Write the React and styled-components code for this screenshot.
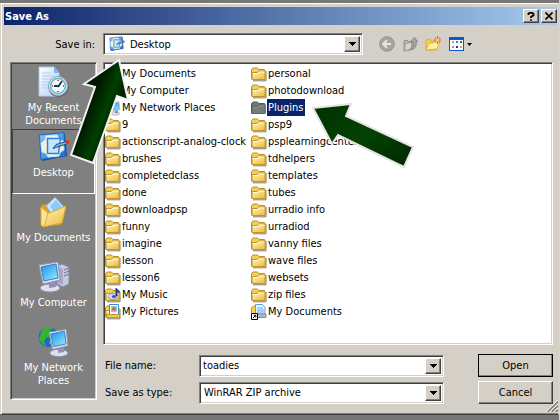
import React, { useState } from 'react'
import styled, { createGlobalStyle } from 'styled-components'

const GlobalStyle = createGlobalStyle`
*{
  box-sizing: border-box;
}
body{
  margin: 0;
  background: #777777;
}
body, button, input, select{
  font-family: "DejaVu Sans Condensed", "Liberation Sans", sans-serif;
  font-size: 11px;
  line-height: 13px;
  color: #000;
}
button, input, select{
  border: none;
  border-radius: 0;
  padding: 0;
  margin: 0;
}
`

const sunken = `
border: 1px solid;
border-color: #808080 #fff #fff #808080;
box-shadow: inset 1px 1px 0 #404040, inset -1px -1px 0 #d4d0c8;
`

const raised = `
background: #d4d0c8;
border: 1px solid;
border-color: #fff #404040 #404040 #fff;
box-shadow: inset -1px -1px 0 #808080;
`

const Dialog = styled.main`
position: relative;
margin-top: 3px;
padding: 3px 1px 10px 3px;
background: #d4d0c8;
border: 1px solid;
border-color: #fff #d4d0c8 #404040 #d4d0c8;
box-shadow: inset 1px 0 0 #fff, inset 0 -1px 0 #808080;
`

const TitleBar = styled.header`
display: flex;
align-items: center;
gap: 2px;
height: 18px;
padding-left: 1px;
background: linear-gradient(90deg, #0a246a, #a6caf0);
`

const Title = styled.h1`
flex: 1;
margin: 0;
font-size: 11px;
font-weight: bold;
color: #fff;
`

const CaptionButton = styled.button`
${raised}
display: grid;
place-items: center;
width: 16px;
height: 14px;
`

const Toolbar = styled.div`
display: flex;
align-items: center;
padding: 8px 0 7px;
`

const SaveInLabel = styled.label`
width: 99px;
padding-right: 8px;
text-align: right;
`

const Combo = styled.div`
${sunken}
position: relative;
display: flex;
flex: ${props => props.$grow ? '1' : '0 1 260px'};
height: 22px;
padding: 2px;
background: #fff;
`

const ComboIcon = styled.span`
position: absolute;
left: 5px;
top: 2px;
pointer-events: none;
`

const comboText = `
flex: 1;
min-width: 0;
background: transparent;
appearance: none;
outline: none;
`

const ComboSelect = styled.select`
${comboText}
padding-left: ${props => props.$icon ? '24px' : '2px'};
`

const ComboInput = styled.input`
${comboText}
padding-left: 1px;
`

const DropButton = styled.button`
${raised}
display: grid;
place-items: center;
width: 16px;
`

const Tools = styled.div`
display: flex;
gap: 7px;
margin-left: 16px;
`

const Tool = styled.button`
display: flex;
align-items: center;
gap: 3px;
background: transparent;
`

const Body = styled.div`
display: grid;
grid-template-columns: 87px 1fr;
column-gap: 6px;
padding: 0 4px 0 6px;
`

const Places = styled.nav`
${sunken}
grid-row: 1 / 3;
margin-bottom: 4px;
padding: 1px;
background: #808080;
`

const Place = styled.button`
display: flex;
flex-direction: column;
align-items: center;
gap: 3px;
width: 100%;
height: 65px;
padding-top: 1px;
color: #fff;
background: transparent;
border: 1px solid;
border-color: ${props => props.$active ? '#404040 #fff #fff #404040' : 'transparent'};
`

const FileList = styled.ul`
${sunken}
display: grid;
grid-template-rows: repeat(15, 17px);
grid-auto-flow: column;
grid-auto-columns: 146px;
align-content: start;
height: 283px;
margin: 0;
padding: 2px 1px;
list-style: none;
background: #fff;
`

const FileRow = styled.button`
display: flex;
align-items: center;
height: 17px;
background: transparent;
white-space: nowrap;

span{
  padding: 2px 2px 2px 1px;
  color: ${props => props.$selected ? '#fff' : '#000'};
  background: ${props => props.$selected ? '#0a246a' : 'transparent'};
}
`

const Form = styled.form`
display: grid;
grid-template-columns: 94px 1fr 75px;
align-items: center;
row-gap: 4px;
padding: 9px 0 0 2px;
`

const ComboCell = styled.div`
display: flex;
margin-right: 34px;
`

const PushButton = styled.button`
${raised}
height: 23px;
outline: ${props => props.$primary ? '1px solid #000' : 'none'};
outline-offset: -1px;
`

const Grip = styled.svg`
position: absolute;
right: 0;
bottom: 2px;
`

const Arrow = styled.svg`
position: absolute;
left: ${props => props.$left};
top: ${props => props.$top};
pointer-events: none;
`

const Sprite = styled.svg`
position: absolute;
width: 0;
height: 0;
`

const Triangle = () => (
    <svg width="7" height="4" viewBox="0 0 7 4" shapeRendering="crispEdges">
        <path d="M0 0h7L3.5 4z" fill="#000" />
    </svg>
)

const Defs = () => (
    <Sprite>
        <symbol id="folder" viewBox="0 0 16 16">
            <path d="M2 14.8h13V5" fill="none" stroke="#857a5c" />
            <path d="M.5 13V3.5L2 2h4.5L8 3.5h5.5l.5 1v9H1z" fill="#f3cf55" stroke="#b98f2a" />
            <path d="M1 13.5V6.5h5.2L7.6 5h6.5v8.5z" fill="url(#gold)" stroke="#bf952f" />
            <path d="M2 7.5h4.5L8 6h5.4" fill="none" stroke="#fffbdc" />
        </symbol>
        <symbol id="folderGray" viewBox="0 0 16 16">
            <path d="M.5 13V3.5L2 2h4.5L8 3.5h5.5l.5 1v9H1z" fill="#727875" stroke="#545a5a" />
            <path d="M1 13.5V6.5h5.2L7.6 5h6.5v8.5z" fill="#777d79" stroke="#5b6265" />
            <path d="M2 7.5h4.5L8 6h5.4" fill="none" stroke="#929895" />
        </symbol>
        <symbol id="music" viewBox="0 0 16 16">
            <use href="#folder" />
            <ellipse cx="8" cy="9.5" rx="4.5" ry="3" fill="#d5dbff" stroke="#8797d8" />
            <path d="M11 9V1c1 2 4 2 3 5-.4-1.7-1.3-2-2-2v5" fill="#253b91" stroke="#253b91" />
            <ellipse cx="9" cy="9.5" rx="2.2" ry="1.5" fill="#4054a8" />
        </symbol>
        <symbol id="pictures" viewBox="0 0 16 16">
            <use href="#folder" />
            <path d="M4.5.5h9v10h-9z" fill="#fff" stroke="#3d8dd0" />
            <path d="M6 2h6v6H6z" fill="#92c7f4" />
            <circle cx="9" cy="5" r="2" fill="#e56331" />
            <path d="M1.5 10.5h13v3h-13z" fill="#f4cb51" stroke="#c5962c" />
        </symbol>
        <symbol id="shortcut" viewBox="0 0 16 16">
            <path d="M.5 14V4l2-2H7v12z" fill="#f4d35f" stroke="#c18b23" />
            <path d="M4.5.5h7L14 3.5V10H4.5z" fill="#e7f4ff" stroke="#5a9fe0" />
            <path d="M6 4h6M6 6h7M6 8h7" stroke="#6fa9e2" />
            <path d="M5 10h10v3.5H5z" fill="#adb9c8" stroke="#8790a0" />
            <path d="M.5 9.5h6v6h-6z" fill="#fff" stroke="#000" />
            <path d="M2 14l2.5-2.5M2.8 11.3h2v2" fill="none" stroke="#000" />
        </symbol>
        <symbol id="desktop" viewBox="0 0 32 32">
            <path d="M3 5l24-3 2 23L4 30z" fill="#0a4fa8" />
            <path d="M1.5 4L26 1.5 27.5 25 3 28.5z" fill="url(#blue)" stroke="#1c66c4" />
            <path d="M8 5l11-1c1 3 3 5 6 6l1 9c-3 1-5 3-5 6l-11 1c-1-3-3-5-6-5l-1-9c3-1 5-4 5-7z" fill="#f8f2d4" stroke="#d5e8f4" />
            <path d="M9.5 7.5h13l-2 15h-11z" fill="#c4e6ff" stroke="#2888df" strokeWidth="1.5" />
            <path d="M15 17.5l3-4 10-3 1 2.5-10 3z" fill="#79b2e6" stroke="#1f4e7e" />
            <circle cx="29.5" cy="11" r="2" fill="#e03a1c" />
        </symbol>
        <symbol id="recent" viewBox="0 0 32 32">
            <path d="M1 1h15l5 6v23H1z" fill="url(#paper)" stroke="#a8caee" />
            <path d="M16 1v6h5z" fill="#79b6f0" />
            <path d="M4 7h9M4 10h13M4 13h10M4 16h8M4 19h6M4 22h6" stroke="#b6cbe8" />
            <circle cx="20.5" cy="21" r="10.2" fill="#5f6a70" />
            <circle cx="20" cy="20" r="9.5" fill="#dfe6e9" stroke="#98a5ac" />
            <circle cx="20" cy="20" r="7.4" fill="#eefaff" stroke="#64b5dc" strokeWidth="1.5" />
            <path d="M20 21l4-6M20 20h-4" stroke="#17384e" strokeWidth="1.8" />
            <path d="M20 14v1M20 25v1M14 20h1M25 20h1" stroke="#dd552f" strokeWidth="2" />
        </symbol>
        <symbol id="documents" viewBox="0 0 32 32">
            <path d="M3 9l8-2 4 3 12 1-4 18-19 1z" fill="#d9a52f" stroke="#bd8720" />
            <path d="M8 10L17 1l11 12-11 11z" fill="#c5e6ff" stroke="#67aae4" />
            <path d="M12 10l6-6 6 7-6 8z" fill="#93c8f5" />
            <path d="M3 12l7 5 4-1 14-6-4 17-19 4z" fill="url(#gold)" stroke="#dba834" />
            <path d="M3 11v18l3 2 4-14z" fill="#fce68d" stroke="#dca83d" />
        </symbol>
        <symbol id="computer" viewBox="0 0 32 32">
            <path d="M19 5l5-2 7 3v17l-6 3-6-3z" fill="#c8c9df" stroke="#8487aa" />
            <path d="M20 6l5 2v16l-5-2z" fill="#a4a8cb" />
            <path d="M26 9l5-2M26 12l5-2M26 15l5-2" stroke="#686f9c" />
            <use href="#monitor" />
        </symbol>
        <symbol id="monitor" viewBox="0 0 32 32">
            <ellipse cx="12" cy="27" rx="10" ry="4" fill="#e0e0ed" stroke="#8e8eae" />
            <path d="M11 20l6-1 1 7-7 1z" fill="#8e91ba" />
            <path d="M1 4l19-3 2 18-17 4z" fill="#e4e5f2" stroke="#9093b5" />
            <path d="M3 6l15-3 2 14-14 3z" fill="url(#screen)" stroke="#3b79bd" />
        </symbol>
        <symbol id="network" viewBox="0 0 32 32">
            <circle cx="10.5" cy="11" r="10" fill="#1568d5" />
            <path d="M4 4c4-4 9-3 11-2l-4 4 2 4-5 2-2 4 3 4c-4-1-7-4-8-8 2-2 1-5 3-8z" fill="#36b32b" />
            <path d="M13 13l5 2-4 5-3-3z" fill="#67c831" />
            <use href="#monitor" x="10" y="2" width="29" height="30" />
        </symbol>
        <linearGradient id="gold" x2="0.8" y2="1">
            <stop stopColor="#fffabf" />
            <stop offset="1" stopColor="#efbd43" />
        </linearGradient>
        <linearGradient id="blue" x2="1" y2="1">
            <stop stopColor="#8fcdfb" />
            <stop offset="1" stopColor="#146bce" />
        </linearGradient>
        <linearGradient id="paper" x2="1" y2="1">
            <stop stopColor="#fff" />
            <stop offset="1" stopColor="#acd3fa" />
        </linearGradient>
        <linearGradient id="screen" x2="0.8" y2="1">
            <stop stopColor="#1b8eef" />
            <stop offset="1" stopColor="#8ce7ff" />
        </linearGradient>
        <linearGradient id="greenUp" gradientUnits="userSpaceOnUse" x1="16" y1="60" x2="40" y2="69">
            <stop stopColor="#001800" />
            <stop offset="0.65" stopColor="#004000" />
            <stop offset="1" stopColor="#002600" />
        </linearGradient>
        <linearGradient id="greenLeft" x2="1" y2="1">
            <stop stopColor="#003000" />
            <stop offset="0.5" stopColor="#044204" />
            <stop offset="1" stopColor="#002600" />
        </linearGradient>
    </Sprite>
)

const Icon = ({ name, size = 16 }) => (
    <svg width={size} height={size} aria-hidden="true"><use href={`#${name}`} /></svg>
)

const places = [
    { label: 'My Recent Documents', icon: 'recent' },
    { label: 'Desktop', icon: 'desktop' },
    { label: 'My Documents', icon: 'documents' },
    { label: 'My Computer', icon: 'computer' },
    { label: 'My Network Places', icon: 'network' },
]

const files = [
    ['My Documents', 'documents'],
    ['My Computer', 'computer'],
    ['My Network Places', 'network'],
    ['9'],
    ['actionscript-analog-clock'],
    ['brushes'],
    ['completedclass'],
    ['done'],
    ['downloadpsp'],
    ['funny'],
    ['imagine'],
    ['lesson'],
    ['lesson6'],
    ['My Music', 'music'],
    ['My Pictures', 'pictures'],
    ['personal'],
    ['photodownload'],
    ['Plugins'],
    ['psp9'],
    ['psplearningcenter'],
    ['tdhelpers'],
    ['templates'],
    ['tubes'],
    ['urradio info'],
    ['urradiod'],
    ['vanny files'],
    ['wave files'],
    ['websets'],
    ['zip files'],
    ['My Documents', 'shortcut'],
]

const ToolIcons = () => (
    <Tools>
        <Tool aria-label="Back">
            <svg width="16" height="16" viewBox="0 0 16 16">
                <circle cx="8" cy="8" r="7.3" fill="#a5a5a2" stroke="#93938f" />
                <path d="M12 8H4.5M8 4.2L4.2 8 8 11.8" fill="none" stroke="#e6e6e2" strokeWidth="2" />
            </svg>
        </Tool>
        <Tool aria-label="Up one level">
            <svg width="16" height="16" viewBox="0 0 16 16">
                <path d="M2 5l3-1 1 2 4-1v8l-8 2z" fill="#b8b8b4" stroke="#92928e" />
                <path d="M3 8l7-2-1 7-6 2z" fill="#d6d6d1" stroke="#9c9c98" />
                <path d="M7 14c4-1 5-4 4-8H8.5l4-4.5 3 4H14c1 5-1 8-7 8.500z" fill="#a8a8a4" stroke="#868682" />
            </svg>
        </Tool>
        <Tool aria-label="Create new folder">
            <svg width="17" height="16" viewBox="0 0 17 16">
                <path d="M1 14V4l4-1 1 2h6v9z" fill="#f7cf51" stroke="#dcae3c" />
                <path d="M1 14l3-7h4l2-2h5l-3 8z" fill="#fff09c" stroke="#e0b139" />
                <path d="M12.5 0v8M8.7 4h7.6M10 1.3l5 5.4M15 1.3l-5 5.4" stroke="#f0502b" />
                <circle cx="12.5" cy="4" r="1.5" fill="#ffe176" />
            </svg>
        </Tool>
        <Tool aria-label="View menu">
            <svg width="15" height="14" viewBox="0 0 15 14" shapeRendering="crispEdges">
                <path d="M0 0h15v14H0z" fill="#0759cc" />
                <path d="M1 3h13v10H1z" fill="#fff" />
                <path d="M3 4h2v2H3z" fill="#9ba6b5" />
                <path d="M7 4h2v2H7z" fill="#5777d8" />
                <path d="M11 4h2v2h-2z" fill="#208538" />
                <path d="M3 9h2v2H3z" fill="#ed8050" />
                <path d="M7 9h2v2H7z" fill="#16349b" />
                <path d="M11 9h2v2h-2z" fill="#d8a635" />
            </svg>
            <svg width="5" height="3" viewBox="0 0 5 3"><path d="M0 0h5L2.5 3z" /></svg>
        </Tool>
    </Tools>
)

const App = () => {
    const [place, setPlace] = useState('Desktop')
    const [selected, setSelected] = useState(17)
    const [fileName, setFileName] = useState('toadies')

    return (
        <>
            <GlobalStyle />
            <Defs />
            <Dialog>
                <TitleBar>
                    <Title>Save As</Title>
                    <CaptionButton aria-label="Help">
                        <svg width="8" height="9" viewBox="0 0 8 9">
                            <path d="M1.5 3V1.5L3 .8h2l1.5 1v1.5L4 5v1M4 7.3v1.5" fill="none" stroke="#000" strokeWidth="1.8" />
                        </svg>
                    </CaptionButton>
                    <CaptionButton aria-label="Close">
                        <svg width="8" height="8" viewBox="0 0 8 8">
                            <path d="M.5.5l7 7M7.5.5l-7 7" stroke="#000" strokeWidth="1.6" />
                        </svg>
                    </CaptionButton>
                </TitleBar>
                <Toolbar>
                    <SaveInLabel htmlFor="save-in">Save in:</SaveInLabel>
                    <Combo>
                        <ComboIcon><Icon name="desktop" /></ComboIcon>
                        <ComboSelect id="save-in" $icon>
                            <option>Desktop</option>
                        </ComboSelect>
                        <DropButton tabIndex={-1} aria-label="Show folders"><Triangle /></DropButton>
                    </Combo>
                    <ToolIcons />
                </Toolbar>
                <Body>
                    <Places>
                        {places.map(({ label, icon }) => (
                            <Place key={label} $active={label === place} onClick={() => setPlace(label)}>
                                <Icon name={icon} size={32} />
                                <span>{label}</span>
                            </Place>
                        ))}
                    </Places>
                    <FileList>
                        {files.map(([name, icon = 'folder'], i) => (
                            <li key={i}>
                                <FileRow $selected={i === selected} onClick={() => setSelected(i)}>
                                    <Icon name={i === selected ? 'folderGray' : icon} />
                                    <span>{name}</span>
                                </FileRow>
                            </li>
                        ))}
                    </FileList>
                    <Form onSubmit={e => e.preventDefault()}>
                        <label htmlFor="file-name">File name:</label>
                        <ComboCell>
                            <Combo $grow>
                                <ComboInput id="file-name" value={fileName} onChange={e => setFileName(e.target.value)} />
                                <DropButton type="button" tabIndex={-1} aria-label="Show recent names"><Triangle /></DropButton>
                            </Combo>
                        </ComboCell>
                        <PushButton $primary>Open</PushButton>
                        <label htmlFor="file-type">Save as type:</label>
                        <ComboCell>
                            <Combo $grow>
                                <ComboSelect id="file-type">
                                    <option>WinRAR ZIP archive</option>
                                </ComboSelect>
                                <DropButton type="button" tabIndex={-1} aria-label="Show types"><Triangle /></DropButton>
                            </Combo>
                        </ComboCell>
                        <PushButton type="button">Cancel</PushButton>
                    </Form>
                </Body>
                <Grip width="12" height="12" viewBox="0 0 12 12">
                    <path d="M0 12L12 0M4 12l8-8M8 12l4-4" stroke="#fff" />
                    <path d="M1.5 12L12 1.5M5.5 12L12 5.5M9.5 12l2.5-2.5" stroke="#808080" strokeWidth="1.6" />
                </Grip>
                <Arrow $left="68px" $top="53px" width="62" height="108" viewBox="0 0 62 108">
                    <path d="M50 3L15 27l11 3L2 98l22 8 24-67 11 4z" fill="url(#greenUp)" stroke="#f2f2f2" strokeWidth="2" />
                </Arrow>
                <Arrow $left="309px" $top="97px" width="106" height="70" viewBox="0 0 106 70">
                    <path d="M3 7l38-4-5 12 67 31-9 20-66-32-6 9z" fill="url(#greenLeft)" stroke="#e4e4e4" strokeWidth="2" />
                </Arrow>
            </Dialog>
        </>
    )
}

export default App
